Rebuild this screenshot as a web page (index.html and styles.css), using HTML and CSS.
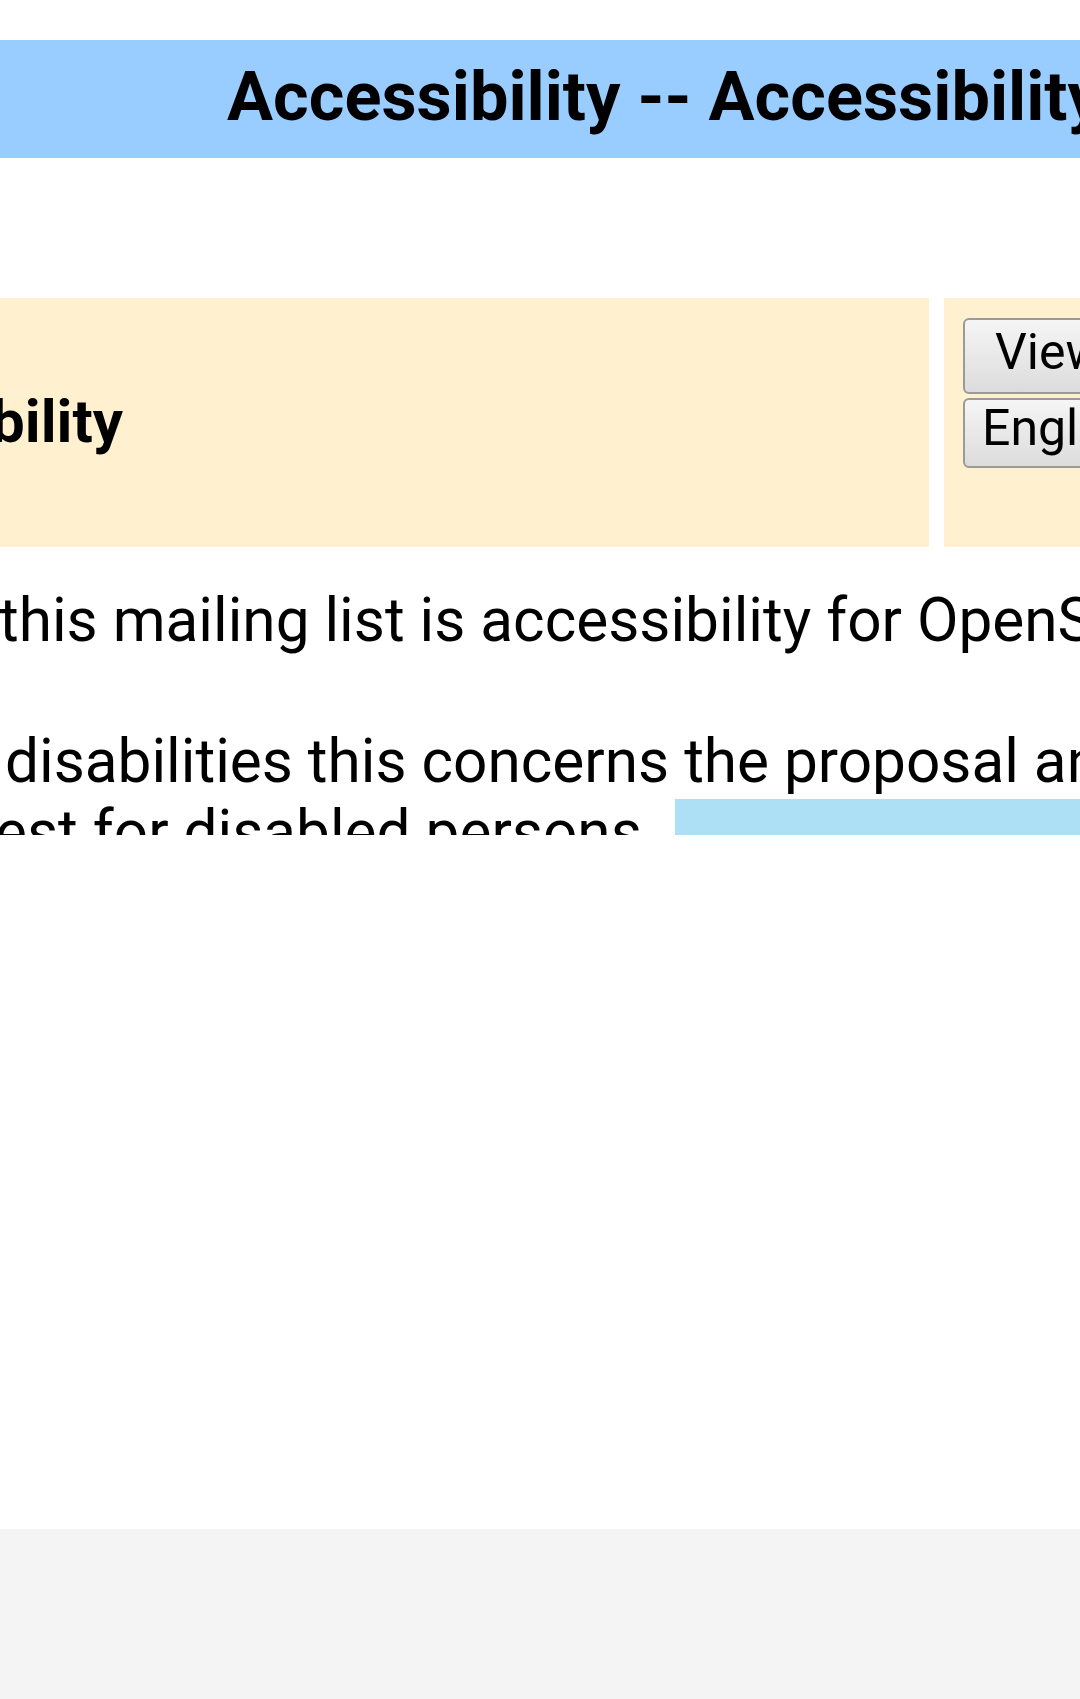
FILE: index.html
```html
<!DOCTYPE html>
<html lang="en">
<head>
<meta charset="utf-8">
<title>Accessibility Info Page</title>
<link rel="stylesheet" href="styles.css">
</head>
<body>
<div class="clip">
  <div class="header"><span class="title">Accessibility -- Accessibility for disabled persons</span></div>
  <div class="about-row">
    <div class="about-cell"><span class="about-title">About Accessibility</span></div>
    <div class="lang-cell">
      <button class="btn btn-view" type="button">View this page in</button>
      <button class="btn btn-lang" type="button">English (USA)</button>
    </div>
  </div>
  <div class="desc">
    <div class="line line1">this mailing list is accessibility for OpenSUSE.</div>
    <div class="para">
      <div class="line line2">disabilities this concerns the proposal and the implementation</div>
      <div class="line line3"><span class="l3text">est for disabled persons.</span><div class="notice"></div></div>
    </div>
  </div>
</div>
<div class="blank"></div>
<div class="footer"></div>
</body>
</html>
```
FILE: styles.css
```css
html, body {
  margin: 0;
  padding: 0;
}
body {
  width: 1080px;
  height: 1699px;
  display: flex;
  flex-direction: column;
  background: #ffffff;
  font-family: Roboto, "Liberation Sans", sans-serif;
  color: #000;
  overflow: hidden;
}
.clip {
  height: 835px;
  flex: 0 0 835px;
  overflow: hidden;
  white-space: nowrap;
}
.header {
  margin-top: 40px;
  height: 114px;
  padding-bottom: 4px;
  background: #99ccff;
  padding-left: 227px;
  font-size: 68.5px;
  font-weight: 700;
  line-height: 114px;
  overflow: hidden;
}
.about-row {
  margin-top: 140px;
  display: flex;
  height: 249px;
  gap: 15px;
}
.about-cell {
  flex: 0 0 929px;
  box-sizing: border-box;
  background: #fff0d0;
  display: flex;
  align-items: center;
  justify-content: flex-end;
  padding-right: 806px;
  overflow: hidden;
}
.about-title {
  flex-shrink: 0;
  font-size: 60px;
  font-weight: 700;
  line-height: normal;
  margin-top: -3px;
}
.lang-cell {
  flex: 1 1 0;
  min-width: 0;
  background: #fff0d0;
  padding: 20px 0 0 19px;
  display: flex;
  flex-direction: column;
  align-items: flex-start;
  gap: 4px;
}
.btn {
  flex-shrink: 0;
  font-family: Roboto, "Liberation Sans", sans-serif;
  font-size: 50px;
  color: #000;
  border: 2px solid #9a9a9a;
  border-radius: 6px;
  background: linear-gradient(#f5f5f5, #dcdcdc);
  white-space: nowrap;
  margin: 0;
  text-align: left;
}
.btn-view {
  height: 76px;
  line-height: 64px;
  padding: 0 30px 8px 30px;
}
.btn-lang {
  height: 70px;
  line-height: 56px;
  padding: 0 60px 10px 17px;
}
.desc {
  margin-top: 38px;
  font-size: 60.3px;
  line-height: normal;
}
.line1 {
  text-indent: -1px;
}
.para {
  margin-top: 70px;
}
.line2 {
  padding-left: 5px;
}
.line3 {
  display: grid;
  grid-template-columns: 675px 1fr;
  align-items: start;
}
.l3text {
  margin-left: -5px;
}
.notice {
  margin-top: 2px;
  height: 60px;
  background: #ade0f5;
}
.blank {
  flex: 1 1 auto;
  background: #ffffff;
}
.footer {
  flex: 0 0 170px;
  background: #f4f4f4;
}
```
